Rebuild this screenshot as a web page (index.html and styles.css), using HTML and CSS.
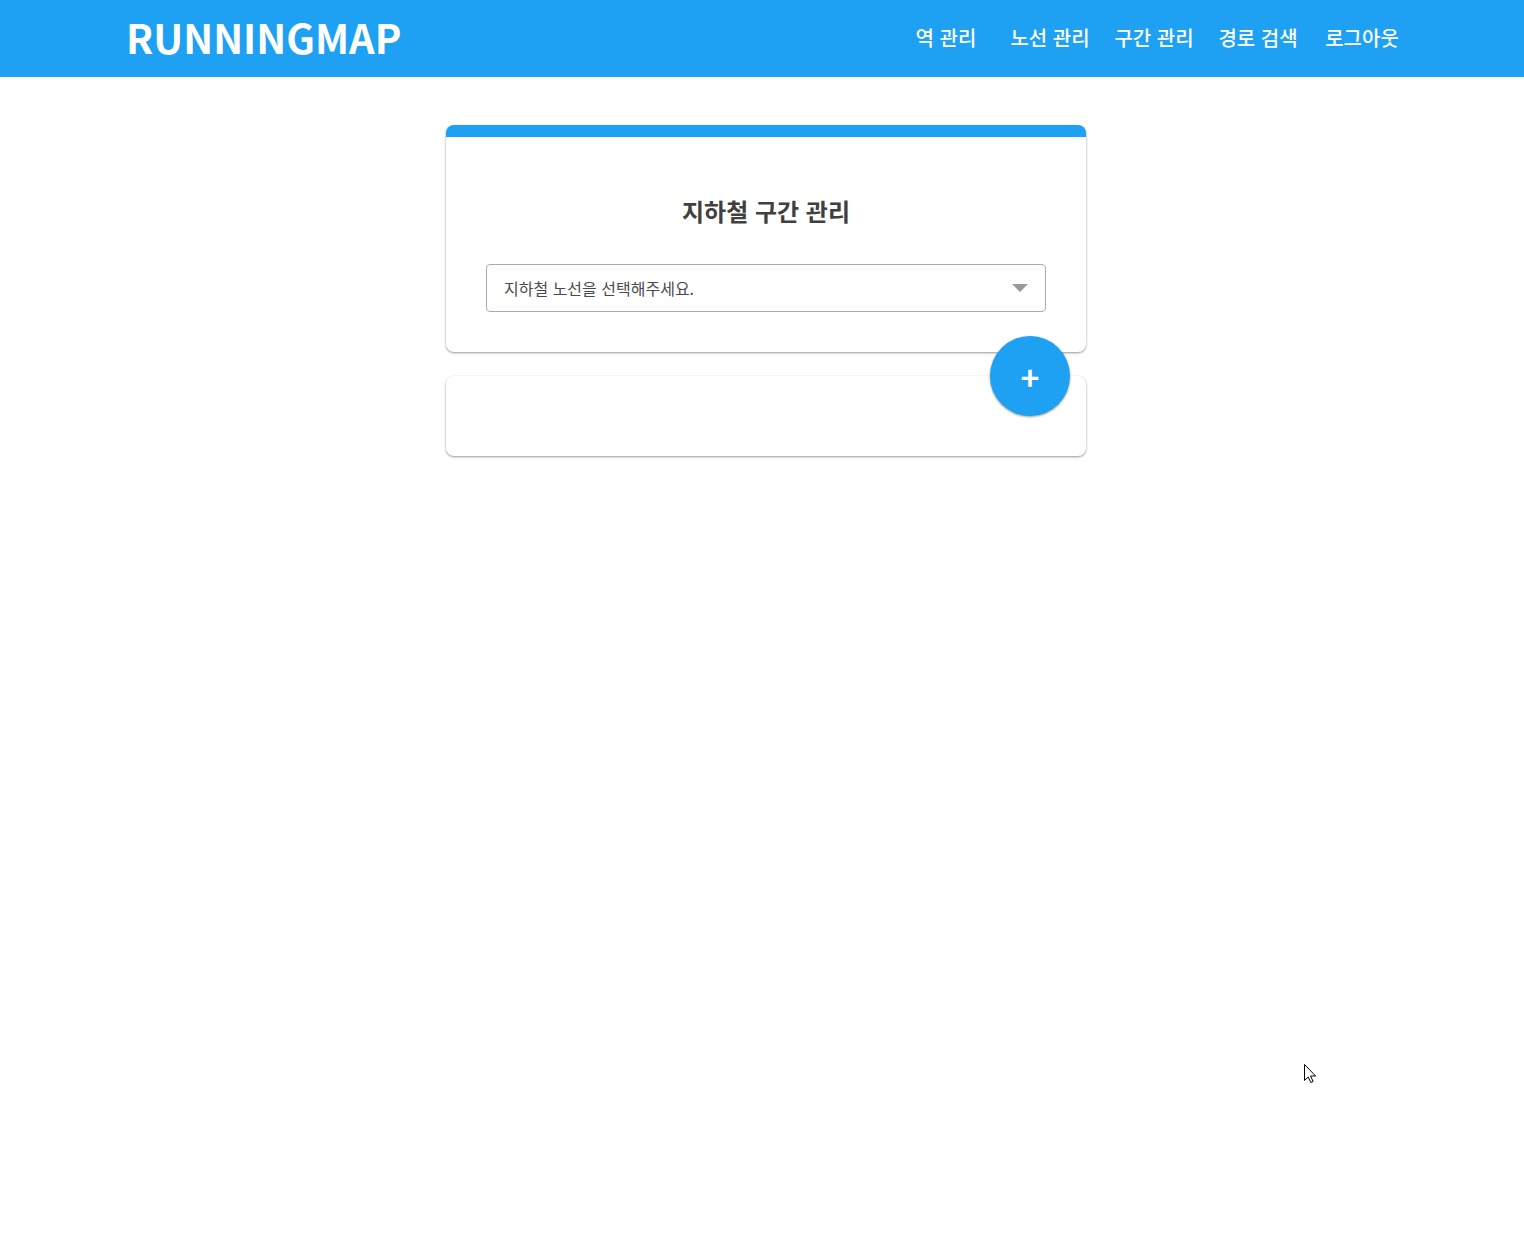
FILE: index.html
```html
<!DOCTYPE html>
<html lang="ko">
<head>
<meta charset="utf-8">
<title>RUNNINGMAP</title>
<link rel="stylesheet" href="styles.css">
</head>
<body>
<header class="header">
  <a class="logo" href="#">RUNNINGMAP</a>
  <nav class="nav">
    <a class="nav-link" href="#">역 관리</a>
    <a class="nav-link" href="#">노선 관리</a>
    <a class="nav-link" href="#">구간 관리</a>
    <a class="nav-link" href="#">경로 검색</a>
    <a class="nav-link" href="#">로그아웃</a>
  </nav>
</header>
<main class="main">
  <section class="card card-top">
    <h1 class="title">지하철 구간 관리</h1>
    <div class="select-box">
      <select class="select" aria-label="지하철 노선">
        <option>지하철 노선을 선택해주세요.</option>
      </select>
      <svg class="arrow" viewBox="0 0 16 8" aria-hidden="true"><path d="M0 0h16L8 8z"/></svg>
    </div>
  </section>
  <section class="card card-list">
    <button class="add" type="button" aria-label="구간 추가">+</button>
  </section>
</main>
<svg class="cursor" viewBox="0 0 13 20" aria-hidden="true"><path d="M.5.5v16l3.700-3.500 2.600 5.500 2.300-1-2.500-5.500h5z"/></svg>
</body>
</html>
```
FILE: styles.css
```css
* { box-sizing: border-box; }
body {
  margin: 0;
  min-height: 100vh;
  background: #fff;
  color: #404040;
  font-family: "Noto Sans CJK KR", sans-serif;
}
.header {
  display: flex;
  align-items: center;
  justify-content: space-between;
  height: 77px;
  padding: 0 110px 2px 126px;
  background: #1ea1f3;
}
.logo {
  padding-bottom: 2px;
  color: #fff;
  font-size: 40px;
  font-weight: 700;
  line-height: 60px;
  text-decoration: none;
}
.nav { display: flex; }
.nav-link {
  width: 104px;
  color: #fff;
  font-size: 20px;
  font-weight: 500;
  line-height: 28px;
  text-align: center;
  text-decoration: none;
}
.main {
  display: flex;
  flex-direction: column;
  gap: 24px;
  width: 100%;
  max-width: 648px;
  margin: 48px auto 0;
  padding-left: 8px;
}
.card {
  border-radius: 8px;
  background: #fff;
  box-shadow: 0 1px 3px rgba(0, 0, 0, .2), 0 1px 2px rgba(0, 0, 0, .24);
}
.card-top {
  padding: 56px 40px 40px;
  border-top: 12px solid #1ea1f3;
}
.title {
  margin: 0 0 35px;
  font-size: 24px;
  font-weight: 700;
  line-height: 36px;
  text-align: center;
}
.select-box { position: relative; }
.select {
  display: block;
  width: 100%;
  height: 48px;
  padding: 0 17px;
  border: 1px solid #aaa;
  border-radius: 4px;
  background: #fff;
  color: #4a4a4a;
  font: 400 16px "Noto Sans CJK KR", sans-serif;
  appearance: none;
}
.arrow {
  position: absolute;
  top: 20px;
  right: 18px;
  width: 16px;
  height: 8px;
  fill: #999;
  pointer-events: none;
}
.card-list {
  position: relative;
  height: 80px;
}
.add {
  position: absolute;
  top: -40px;
  right: 16px;
  width: 80px;
  height: 80px;
  padding: 0;
  border: 0;
  border-radius: 50%;
  background: #1ea1f3;
  box-shadow: 0 1px 3px rgba(0, 0, 0, .2), 0 1px 2px rgba(0, 0, 0, .24);
  color: #fff;
  font: 700 32px "Noto Sans CJK KR", sans-serif;
}
.cursor {
  position: absolute;
  left: 1304px;
  top: 1064px;
  width: 13px;
  height: 20px;
  fill: #fff;
  stroke: #000;
}
```
